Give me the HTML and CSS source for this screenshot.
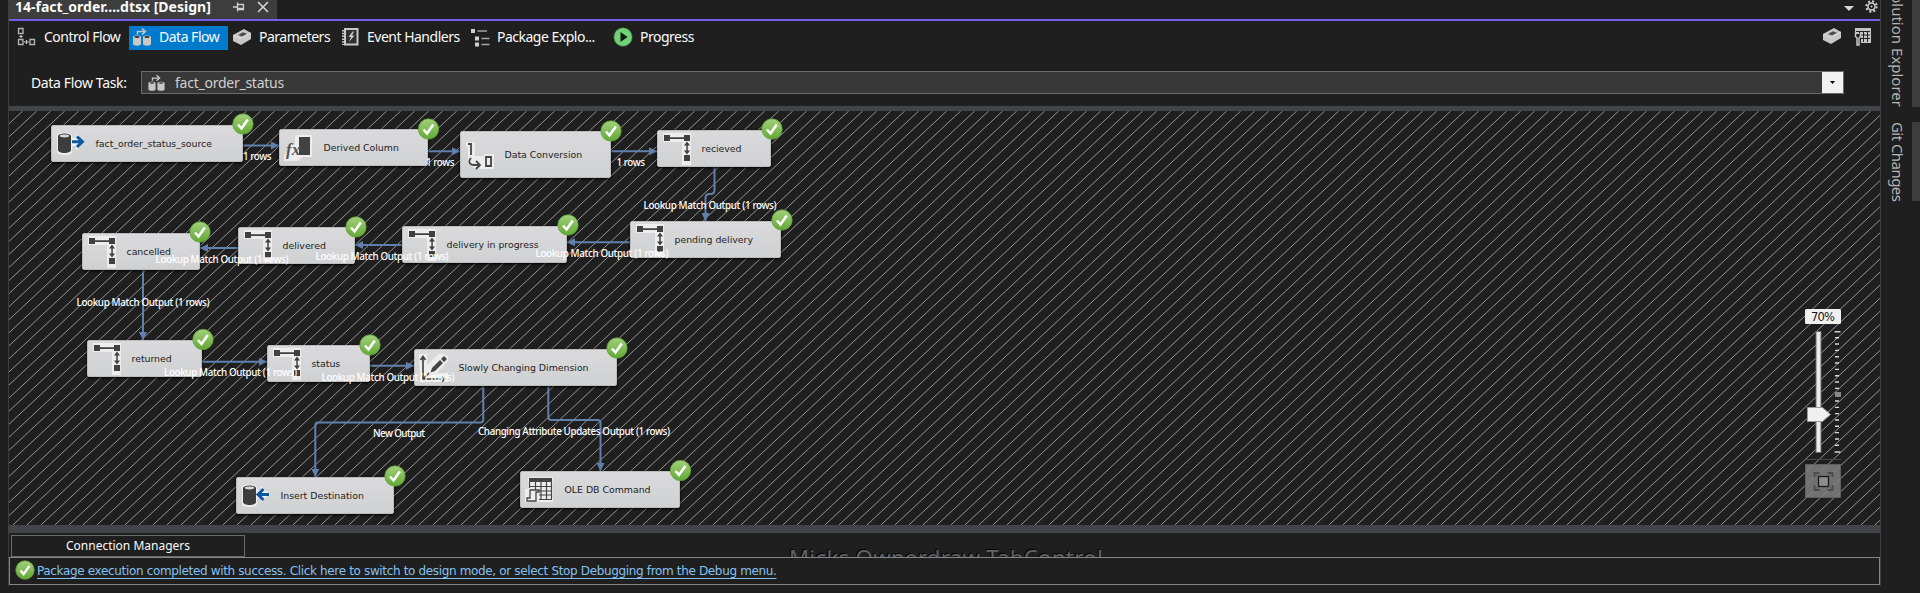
FILE: index.html
```html
<!DOCTYPE html>
<html lang="en">
<head>
<meta charset="utf-8">
<title>fact_order_status - Data Flow</title>
<link rel="stylesheet" href="styles.css">
</head>
<body>
<svg class="defs" width="0" height="0">
  <defs>
    <linearGradient id="green" x1="0" y1="0" x2="0" y2="1"><stop offset="0" stop-color="#a3d07c"/><stop offset="1" stop-color="#62a935"/></linearGradient>
    <symbol id="ok" viewBox="0 0 22 22"><circle cx="11" cy="11" r="10.2" fill="url(#green)" stroke="#5f9e38" stroke-width=".8"/><path d="M6 11.5l3.500 4L15.800 6.500" fill="none" stroke="#fff" stroke-width="2.600"/></symbol>
    <symbol id="lookup" viewBox="0 0 30 32"><path d="M1 0h28v32H20V9H1z" fill="#ededee"/><g fill="#404040"><path d="M2 2h6v6H2zM22 2h6v6h-6zM22 22h6v6h-6zM7 4.200h16v1.700H7zM24.300 11h1.500v9h-1.500z"/><path d="M25 8.500l3 4h-6zM25 21.500l3-4h-6z"/></g></symbol>
    <symbol id="flow" viewBox="0 0 20 20"><g fill="#c8c8c8"><path d="M1 10v7c0 2.300 8 2.300 8 0v-7c0-2-8-2-8 0z"/><path d="M11 10v7c0 2.300 8 2.300 8 0v-7c0-2-8-2-8 0z"/></g><ellipse cx="5" cy="10" rx="2.700" ry=".9" fill="#333"/><ellipse cx="15" cy="10" rx="2.700" ry=".9" fill="#333"/><path d="M5.500 7.500V4.500H12M10 1.500l3.500 3-3.500 3" fill="none" stroke="#c8c8c8" stroke-width="1.500"/></symbol>
    <symbol id="brick" viewBox="0 0 20 18"><path d="M1 7L12 1l7 4v6L9 17l-8-4z" fill="#c8c8c8"/><path d="M1 7.500l7.500 3L19 5" fill="none" stroke="#ddd"/><path d="M6 7l5-2.800 4 1.600-5 2.700z" fill="#4b4b4b"/></symbol>
    <symbol id="db" viewBox="0 0 30 26"><path d="M1 4C1 1 16 1 16 4v3h4V3l9 8-9 8v-4h-4v6c0 4-15 4-15 0z" fill="#eee"/><path d="M2 5v14c0 4 13 4 13 0V5z" fill="#3d3d3d"/><ellipse cx="8.500" cy="5" rx="6.500" ry="2.600" fill="#3d3d3d"/><ellipse cx="8.500" cy="5" rx="4.700" ry="1.400" fill="#d8d8d8"/></symbol>
  </defs>
</svg>
<div class="window">
  <div class="main">
    <header class="titlebar">
      <div class="doc-tab"><b class="doc-name">14-fact_order....dtsx [Design]</b>
        <svg class="pin" width="12" height="12" viewBox="0 0 12 12"><path d="M0 6h4M4.500 1.500v9M5 3.500h5.500v5H5M5 7.500h5.500" fill="none" stroke="#d0d0d0" stroke-width="1.300"/></svg>
        <svg class="close" width="12" height="12" viewBox="0 0 12 12"><path d="M1 1l10 10M11 1L1 11" stroke="#d8d8d8" stroke-width="1.500"/></svg>
      </div>
      <div class="title-tools">
        <svg width="10" height="6" viewBox="0 0 10 6"><path d="M0 0h10L5 5z" fill="#d6d6d6"/></svg>
        <svg class="gear" width="13" height="13" viewBox="0 0 13 13"><circle cx="6.500" cy="6.500" r="3.500" fill="none" stroke="#d0d0d0" stroke-width="1.500"/><circle cx="6.500" cy="6.500" r="5.200" fill="none" stroke="#d0d0d0" stroke-width="2" stroke-dasharray="2.040 2.040"/><circle cx="6.500" cy="6.500" r="1" fill="#d0d0d0"/></svg>
      </div>
    </header>
    <nav class="tabs">
      <div class="tab tab-control"><svg width="19" height="20" viewBox="0 0 19 20"><path d="M1.500 1.500h4.500v5H1.500zM1.500 12.500h4.500v5H1.500zM13 12.500h4.500v5H13z" fill="none" stroke="#b5b5b5" stroke-width="1.300"/><path d="M4 8v3M2.300 9.500h3.400M7 15h5M9.500 13v4" stroke="#c8c8c8" stroke-width="1.100"/></svg><span>Control Flow</span></div>
      <div class="tab tab-data"><svg width="20" height="20"><use href="#flow"/></svg><span>Data Flow</span></div>
      <div class="tab tab-param"><svg width="20" height="18"><use href="#brick"/></svg><span>Parameters</span></div>
      <div class="tab tab-event"><svg width="17" height="18" viewBox="0 0 17 18"><path d="M3 1h12.500v15.500H3z" fill="#303030" stroke="#c8c8c8" stroke-width="2"/><path d="M1 2v15" stroke="#c8c8c8" stroke-width="3" stroke-dasharray="1.500 1.300"/><path d="M10.500 3.500L6.500 9h2.500l-2 5 5.500-6.500H10l2-4z" fill="#c8c8c8"/></svg><span>Event Handlers</span></div>
      <div class="tab tab-package"><svg width="19" height="19" viewBox="0 0 19 19"><path d="M0 1h4v4H0zM4 8.500h4v4H4zM4 14.500h4v4H4z" fill="#d0d0d0"/><path d="M6.500 3H16M10.500 10.500h8M10.500 16.500h8" stroke="#a5a5a5" stroke-width="1.500"/></svg><span>Package Explo...</span></div>
      <div class="tab tab-progress"><svg width="20" height="20" viewBox="0 0 20 20"><circle cx="10" cy="10" r="9.200" fill="#72d077" stroke="#397a3c" stroke-width=".6"/><path d="M7.500 5l7 5-7 5z" fill="#101810"/></svg><span>Progress</span></div>
      <div class="nav-tools"><svg width="20" height="18"><use href="#brick"/></svg>
        <svg width="18" height="19" viewBox="0 0 18 19"><path d="M1 1h16v15H7V7H1z" fill="#c6c6c6"/><path d="M2 4.500h14M6.500 8h9.500M7 11.500h9M5.500 4v3M9.500 4v11M13.500 4v11" stroke="#222" stroke-width="1"/><path d="M1.500 6v3.500L3 11v7h2v-7l1.500-1.500V6" fill="none" stroke="#c6c6c6" stroke-width="1.500"/></svg></div>
    </nav>
    <div class="task-row">
      <span class="task-label">Data Flow Task:</span>
      <div class="combo"><svg width="19" height="18" viewBox="0 0 20 20"><use href="#flow"/></svg><span class="task-name">fact_order_status</span><span class="drop"><svg width="5" height="3" viewBox="0 0 5 3"><path d="M0 0h5L2.500 3z" fill="#000"/></svg></span></div>
    </div>
    <section class="stage">
      <svg class="layer" viewBox="9 111 1871 414">
        <defs>
          <marker id="arrow" viewBox="0 0 8 8" refX="8" refY="4" markerWidth="8" markerHeight="8" markerUnits="userSpaceOnUse" orient="auto"><path d="M0 0l8 4-8 4z" fill="#6080ad"/></marker>
        </defs>
        <path id="hatch" class="hatch"/>
        <g class="edges">
          <path d="M243 145.500h36"/><path d="M428 151.300h32"/><path d="M611 151.300h46"/>
          <path d="M714.500 167v23q0 4-4 4h-1q-4 0-4 4v23"/>
          <path d="M630 242.300h-63"/><path d="M402 245h-47"/><path d="M238 248h-38"/>
          <path d="M143 270v70"/><path d="M202 361.700h65"/><path d="M370 365.800h44"/>
          <path d="M483.300 386v33.500q0 3-3 3H318.300q-3 0-3 3V477"/>
          <path d="M548.300 386v31q0 3 3 3h46.200q3 0 3 3v48"/>
        </g>
      </svg>
      <div class="node n-source"><svg class="icon" width="30" height="26" viewBox="0 0 30 26"><use href="#db"/><path d="M16 10.700h8M21 5.500l5.500 5.200L21 16" fill="none" stroke="#0b58a2" stroke-width="3"/></svg><span>fact_order_status_source</span></div>
      <div class="node n-derived"><svg class="icon" width="30" height="26" viewBox="0 0 30 26"><path d="M11 0h17v22H19l-6 4H0v-5l7-11h4z" fill="#ededee"/><path d="M15 2h11v18H15z" fill="#414141"/><text x="2" y="20" class="fx">fx</text></svg><span>Derived Column</span></div>
      <div class="node n-conv"><svg class="icon" width="30" height="30" viewBox="0 0 30 30"><path d="M1 2h9v14h9v-2h10v15H11l-8-5V7H1z" fill="#ededee"/><path d="M3 4h3v11M6 18c-4 5 0 7 3 7h5M11 21l4 4-4 4" fill="none" stroke="#444" stroke-width="1.800"/><path d="M21 17h5v9h-5z" fill="none" stroke="#444" stroke-width="1.800"/></svg><span>Data Conversion</span></div>
      <div class="node n-recv"><svg class="icon" width="30" height="32"><use href="#lookup"/></svg><span>recieved</span></div>
      <div class="node n-pending"><svg class="icon" width="30" height="32"><use href="#lookup"/></svg><span>pending delivery</span></div>
      <div class="node n-prog"><svg class="icon" width="30" height="32"><use href="#lookup"/></svg><span>delivery in progress</span></div>
      <div class="node n-deliv"><svg class="icon" width="30" height="32"><use href="#lookup"/></svg><span>delivered</span></div>
      <div class="node n-canc"><svg class="icon" width="30" height="32"><use href="#lookup"/></svg><span>cancelled</span></div>
      <div class="node n-ret"><svg class="icon" width="30" height="32"><use href="#lookup"/></svg><span>returned</span></div>
      <div class="node n-status"><svg class="icon" width="30" height="32"><use href="#lookup"/></svg><span>status</span></div>
      <div class="node n-scd"><svg class="icon" width="30" height="30" viewBox="0 0 30 30"><path d="M0 1h8v11L21 0l8 3v5L18 20h11v9H1z" fill="#ededee"/><path d="M4 4v22h22M1.500 7L4 3.500 6.500 7M23 23.500l3 2.500-3 2.500M4 26l6-6" fill="none" stroke="#444" stroke-width="1.700"/><path d="M13 15l-1.500 4.500L16 18l8-8-3-3zM22 6l3-3 3 3-3 3z" fill="#444"/></svg><span>Slowly Changing Dimension</span></div>
      <div class="node n-insert"><svg class="icon" width="30" height="26" viewBox="0 0 30 26"><use href="#db"/><path d="M28 11.500h-9M22.500 6L17 11.500l5.500 5.500" fill="none" stroke="#0b58a2" stroke-width="3"/></svg><span>Insert Destination</span></div>
      <div class="node n-ole"><svg class="icon" width="30" height="28" viewBox="0 0 30 28"><path d="M3 1h25v25H0V13h3z" fill="#ededee"/><path d="M4 2h23v4H4z" fill="#444"/><path d="M4.500 6v6M10.500 6v8M16 6v17M21.500 6v17M26.500 6v17M4 10.500h23M14 15h13M14 19h13M14 23.500h13" stroke="#444" stroke-width="1.200"/><path d="M5 14h9v2h-3v9H2v-3h3z" fill="#eee" stroke="#444" stroke-width="1.300"/></svg><span>OLE DB Command</span></div>
      <svg class="layer" viewBox="9 111 1871 414">
        <g class="labels">
          <text x="243" y="159.500" textLength="28.500">1 rows</text><text x="426" y="165.500" textLength="28.500">1 rows</text><text x="616.500" y="165.500" textLength="28.500">1 rows</text>
          <text x="643.500" y="208.500" textLength="133">Lookup Match Output (1 rows)</text>
          <text x="535.500" y="256.500" textLength="133">Lookup Match Output (1 rows)</text>
          <text x="315.500" y="259.500" textLength="133">Lookup Match Output (1 rows)</text>
          <text x="155.500" y="262.500" textLength="133">Lookup Match Output (1 rows)</text>
          <text x="76.500" y="305.500" textLength="133">Lookup Match Output (1 rows)</text>
          <text x="164" y="375.500" textLength="133">Lookup Match Output (1 rows)</text>
          <text x="321.500" y="380.500" textLength="133">Lookup Match Output (1 rows)</text>
          <text x="373" y="436.500" textLength="52">New Output</text>
          <text x="478" y="434.500" textLength="192">Changing Attribute Updates Output (1 rows)</text>
        </g>
        <g><use href="#ok" x="232" y="113" width="22" height="22"/><use href="#ok" x="417.500" y="118" width="22" height="22"/><use href="#ok" x="600" y="120" width="22" height="22"/><use href="#ok" x="761" y="118" width="22" height="22"/><use href="#ok" x="771" y="209" width="22" height="22"/><use href="#ok" x="557" y="214" width="22" height="22"/><use href="#ok" x="345" y="216" width="22" height="22"/><use href="#ok" x="189" y="221" width="22" height="22"/><use href="#ok" x="192" y="328.500" width="22" height="22"/><use href="#ok" x="359" y="334" width="22" height="22"/><use href="#ok" x="606" y="337" width="22" height="22"/><use href="#ok" x="384" y="465" width="22" height="22"/><use href="#ok" x="669.500" y="459.500" width="22" height="22"/></g>
        <g>
          <rect x="1805" y="309" width="36" height="15" rx="1.500" fill="#f0f0f0"/>
          <text x="1811" y="320.500" class="pct" textLength="24">70%</text>
          <rect x="1816" y="331.500" width="5" height="121" fill="#e8ecec" stroke="#666b6b"/>
          <path d="M1807.500 407.500h15l8 7-8 7h-15z" fill="#f0f0f0" stroke="#9a9a9a"/>
          <path d="M1837 337v113" stroke="#d8d8d8" stroke-width="4" stroke-dasharray="1.400 4.930"/>
          <path d="M1834.500 331.700h6M1834.500 452h6" stroke="#d0d0d0" stroke-width="1.500"/>
          <path d="M1835 392h6v5h-6z" fill="#888"/>
          <path d="M1805 459.500h36" stroke="#484848"/>
          <path d="M1805.500 464.500h35v33h-35z" fill="#7d7d7d" fill-opacity=".88" stroke="#606060"/>
          <rect x="1818.500" y="476.500" width="10" height="10" fill="#8c8c8c" stroke="#181818" stroke-width="1.300"/>
          <path d="M1814.500 477v-4h5M1827.500 473h5v4M1832.500 485v5h-5M1819.500 490h-5v-5" fill="none" stroke="#4b4b4b" stroke-width="1.800"/>
          <path d="M1815 473.500l3 3M1832 473.500l-3 3M1832 489.500l-3-3M1815 489.500l3-3" stroke="#505050"/>
        </g>
      </svg>
    </section>
    <div class="conn-row"><div class="conn"><span class="conn-text">Connection Managers</span></div><span class="ghost">Micks Ownerdraw TabControl</span></div>
    <footer class="message"><svg width="20" height="20"><use href="#ok"/></svg><a class="message-link">Package execution completed with success. Click here to switch to design mode, or select Stop Debugging from the Debug menu.</a></footer>
  </div>
  <aside class="side"><div class="side-tab explorer"><span>Solution Explorer</span></div><div class="side-tab git"><span>Git Changes</span></div></aside>
</div>
<script src="hatch.js"></script>
</body>
</html>
```
FILE: hatch.js
```js
// Diagonal hatching of the design surface: one line every 14px.
let d = "";
for (let x = 22.7; x < 2340; x += 14) {
  d += `M${x.toFixed(1)} 111L${(x - 443.8).toFixed(1)} 525`;
}
document.getElementById("hatch").setAttribute("d", d);
```
FILE: styles.css
```css
* { box-sizing: border-box; }
body { margin: 0; background: #1f1f1f; color: #fafafa; font-family: "Noto Sans", sans-serif; overflow: hidden; }
svg { display: block; flex: none; }
.defs { position: absolute; }
.window { display: flex; height: 593px; }
.main { width: 1873px; margin-left: 8px; height: 586px; border-left: 1px solid #3d3d40; border-right: 1px solid #3d3d40; display: flex; flex-direction: column; }
span, b, a { white-space: nowrap; }

.titlebar { height: 21px; flex: none; border-bottom: 2px solid #7160e8; display: flex; justify-content: space-between; }
.doc-tab { width: 268px; height: 19px; background: #3d3d3d; display: flex; align-items: center; padding-left: 6px; overflow: hidden; }
.doc-name { font-size: 14px; line-height: 20px; width: 205px; margin-top: -5px; }
.pin { margin-left: 13px; margin-top: -6px; }
.close { margin-left: 12px; margin-top: -5px; }
.title-tools { display: flex; align-items: flex-start; gap: 11px; padding: 6px 2px 0 0; }
.gear { margin-top: -6px; }

.tabs { height: 34px; flex: none; display: flex; align-items: center; padding: 0 8px; font-size: 14px; letter-spacing: -0.5px; line-height: 20px; }
.tab { display: flex; align-items: center; height: 24px; flex: none; }
.tab svg { margin-top: -2px; }
.tab span { margin-left: 8px; margin-top: -3px; }
.tab-control { width: 112px; }
.tab-data { width: 99px; background: #007acc; padding-left: 3px; }
.tab-data span, .tab-param span { margin-left: 7px; }
.tab-param { width: 114px; padding-left: 4px; }
.tab-event { width: 129px; }
.tab-package { width: 142px; }
.tab-package span { margin-left: 7px; }
.tab-progress { width: 90px; }
.tab-progress span { margin-left: 7px; }
.nav-tools { margin-left: auto; display: flex; gap: 12px; margin-top: -4px; }

.task-row { height: 56px; flex: none; display: flex; padding: 16px 36px 0 22px; border-bottom: 5px solid #414549; }
.task-label { width: 110px; font-size: 14px; letter-spacing: -0.35px; line-height: 24px; }
.combo { flex: 1; height: 23px; border: 1px solid #6a6a6a; background: #383838; display: flex; align-items: center; padding-left: 5px; }
.task-name { margin-left: 9px; color: #d0d0d0; font-size: 14px; letter-spacing: -0.25px; line-height: 20px; margin-top: 1px; }
.drop { width: 21px; height: 21px; margin-left: auto; background: #f2f2f2; display: flex; align-items: center; justify-content: center; }

.stage { position: relative; height: 414px; flex: none; background: #1f1f1f; }
.layer { position: absolute; left: 0; top: 0; width: 1871px; height: 414px; overflow: hidden; }
.hatch { fill: none; stroke: #949494; stroke-width: 1; }
.edges path { fill: none; stroke: #6080ad; stroke-width: 2; marker-end: url(#arrow); }
.labels { font: 500 9.8px "Noto Sans", sans-serif; fill: #fff; }
.pct { font: 11.5px "DejaVu Sans", sans-serif; fill: #151515; }
.node { position: absolute; height: 37px; background: linear-gradient(#dadadd, #d0d1d3); border: 1px solid #bcbcbe; border-radius: 2px; box-shadow: 0 1px 3px #000; display: flex; align-items: center; padding-left: 4px; color: #222; font: 9.4px "DejaVu Sans", sans-serif; }
.node span { margin-left: 9.5px; letter-spacing: -0.02px; }
.fx { font: italic bold 17px "Liberation Serif", serif; fill: #555; }
.n-source { left: 42px; top: 14px; width: 192px; }
.n-derived { left: 270px; top: 18px; width: 149px; }
.n-conv { left: 451px; top: 20px; width: 151px; height: 47px; }
.n-recv { left: 648px; top: 19px; width: 114px; }
.n-pending { left: 621px; top: 110px; width: 151px; }
.n-prog { left: 393px; top: 115px; width: 165px; }
.n-deliv { left: 229px; top: 116px; width: 117px; }
.n-canc { left: 73px; top: 122px; width: 118px; }
.n-ret { left: 78px; top: 229px; width: 115px; }
.n-status { left: 258px; top: 234px; width: 103px; }
.n-scd { left: 405px; top: 238px; width: 203px; }
.n-insert { left: 227px; top: 366px; width: 158px; }
.n-ole { left: 511px; top: 360px; width: 160px; }

.conn-row { height: 32px; flex: none; border-top: 8px solid #414549; display: flex; padding: 2px 0 0 2px; overflow: hidden; }
.conn { width: 234px; height: 22px; border: 1px solid #6a6a6a; display: flex; justify-content: center; font-size: 12px; line-height: 19px; }
.ghost { margin: 7px 0 0 544px; font-size: 22px; letter-spacing: 0.4px; line-height: 30px; color: #626262; text-shadow: -1px -1px #000; }
.message { height: 28px; flex: none; border: 1px solid #85858c; display: flex; align-items: center; padding: 0 0 2px 5px; }
.message-link { margin-left: 2px; margin-top: 1px; color: #85c1f0; font: 12px "DejaVu Sans", sans-serif; letter-spacing: -0.345px; text-decoration: underline; text-underline-offset: 3px; }

.side { width: 39px; height: 593px; color: #b4b4b4; font-size: 15px; line-height: 20px; overflow: hidden; }
.side-tab { writing-mode: vertical-rl; border-right: 8px solid #3d3d3d; width: 39px; padding-right: 4px; display: flex; }
.explorer { height: 107px; justify-content: flex-end; }
.git { height: 79px; margin-top: 15px; letter-spacing: -0.55px; }
```
